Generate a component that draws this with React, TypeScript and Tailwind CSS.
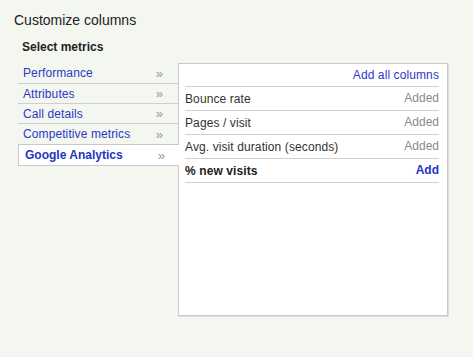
const CATEGORIES = ["Performance", "Attributes", "Call details", "Competitive metrics"];

const METRICS: { name: string; added: boolean }[] = [
  { name: "Bounce rate", added: true },
  { name: "Pages / visit", added: true },
  { name: "Avg. visit duration (seconds)", added: true },
  { name: "% new visits", added: false },
];

function Chevron() {
  return <span className="text-[13px] leading-none text-[#999]">»</span>;
}

export default function App() {
  return (
    <div
      className="w-[473px] h-[357px] bg-[#f4f6f0] pt-[12px] pl-[14px] text-[#222]"
      style={{ fontFamily: '"Liberation Sans", Arial, sans-serif' }}
    >
      <h1 className="text-[14px] leading-[16px] font-normal">Customize columns</h1>
      <h2 className="mt-[12px] ml-[8px] text-[12px] leading-[14px] font-bold">Select metrics</h2>

      <div className="mt-[9px] ml-[4px] flex">
        {/* category list */}
        <div className="w-[160px]">
          {CATEGORIES.map((c, i) => (
            <div
              key={c}
              className={`flex items-center justify-between pl-[5px] pr-[15px] ${
                i === 0 ? "h-[21px]" : "h-[20px]"
              } ${i < CATEGORIES.length - 1 ? "border-b border-[#cfd0cc]" : ""}`}
            >
              <span className="text-[12px] tracking-[0.1px] text-[#2b39c6]">{c}</span>
              <Chevron />
            </div>
          ))}
          <div className="relative z-10 flex items-center justify-between w-[161px] h-[22px] bg-white border-l border-y border-[#c9c9c9] pl-[6px] pr-[14px]">
            <span className="text-[12px] font-bold text-[#2236c4]">Google Analytics</span>
            <Chevron />
          </div>
        </div>

        {/* metrics panel */}
        <div className="w-[270px] h-[253px] bg-white border border-[#cacaca] shadow-[1px_1px_0_#dcdcdc] pl-[6px] pr-[8px]">
          <div className="flex items-center justify-end h-[23px] border-b border-[#cfcfcf]">
            <span className="text-[12px] tracking-[0.1px] text-[#2b39c6]">Add all columns</span>
          </div>
          {METRICS.map((m) => (
            <div key={m.name} className="flex items-center justify-between h-[24px] border-b border-[#cfcfcf]">
              <span className={`text-[12px] tracking-[0.1px] ${m.added ? "text-[#333]" : "font-bold text-[#222]"}`}>
                {m.name}
              </span>
              {m.added ? (
                <span className="text-[12px] text-[#8a8a8a] -mt-[2px]">Added</span>
              ) : (
                <span className="text-[12px] font-bold text-[#2236c4] -mt-[2px]">Add</span>
              )}
            </div>
          ))}
        </div>
      </div>
    </div>
  );
}
